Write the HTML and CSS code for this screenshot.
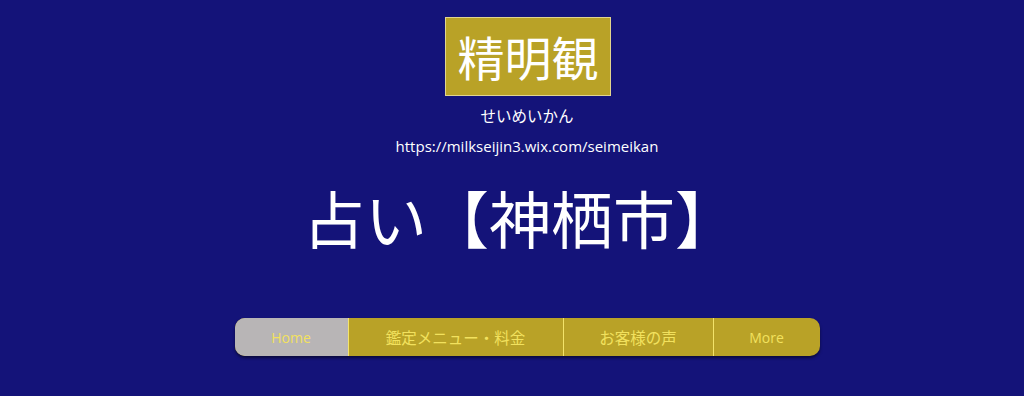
FILE: index.html
```html
<!DOCTYPE html>
<html lang="ja">
<head>
<meta charset="utf-8">
<link rel="stylesheet" href="styles.css">
</head>
<body>
<div class="page">
  <div class="logo">精明観</div>
  <div class="kana">せいめいかん</div>
  <div class="url">https://milkseijin3.wix.com/seimeikan</div>
  <h1 class="title">占い【神栖市】</h1>
  <nav class="nav">
    <a class="item home">Home</a>
    <a class="item menu jp">鑑定メニュー・料金</a>
    <a class="item voice jp">お客様の声</a>
    <a class="item more">More</a>
  </nav>
</div>
</body>
</html>
```
FILE: styles.css
```css
html, body {
  margin: 0;
  padding: 0;
  background: #141379;
  height: 100%;
}
.page {
  display: flex;
  flex-direction: column;
  align-items: center;
  padding-top: 17px;
  padding-left: 30px;
  font-family: "Noto Sans CJK JP", "Open Sans", sans-serif;
  color: #ffffff;
}
.logo {
  box-sizing: border-box;
  width: 166px;
  height: 79px;
  background: #b9a227;
  border: 1px solid #e2d58e;
  font-size: 47px;
  line-height: 76px;
  text-align: center;
  color: #ffffff;
  position: relative;
  left: 1px;
}
.kana {
  margin-top: 8px;
  font-size: 15.5px;
  line-height: 22px;
}
.url {
  margin-top: 10px;
  font-family: "Open Sans", sans-serif;
  font-size: 15px;
  line-height: 20px;
}
.title {
  margin: 21px 0 0 0;
  font-weight: normal;
  font-size: 62px;
  line-height: 80px;
  position: relative;
  left: -7px;
}
.nav {
  margin-top: 61px;
  display: flex;
  height: 38px;
  border-radius: 10px;
  overflow: hidden;
  background: #b9a227;
  box-shadow: 0 2px 3px rgba(0,0,0,0.5);
}
.item {
  display: flex;
  align-items: center;
  justify-content: center;
  font-family: "Open Sans", "Noto Sans CJK JP", sans-serif;
  font-size: 14px;
  color: #f2e15e;
  border-left: 1px solid #f3e36a;
  box-sizing: border-box;
}
.item.jp {
  font-family: "Noto Sans CJK JP", sans-serif;
  font-size: 15.5px;
}
.home {
  width: 113px;
  background: #b8b5b6;
  border-left: none;
}
.menu { width: 215px; }
.voice { width: 150px; }
.more { width: 107px; }
```
